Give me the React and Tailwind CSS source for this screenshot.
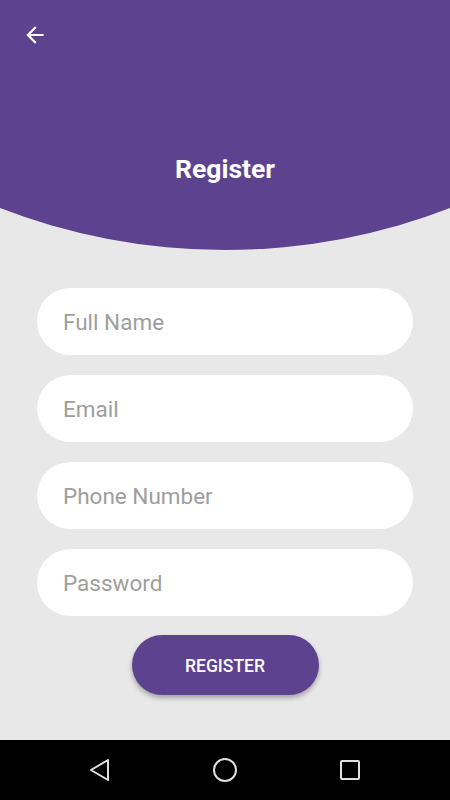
import React from "react";

function Field({ placeholder, type = "text" }) {
  return (
    <input
      type={type}
      placeholder={placeholder}
      className="h-[67px] w-full rounded-full bg-white px-[26px] text-[22.5px] text-gray-700 outline-none placeholder:text-[#9e9e9e]"
    />
  );
}

export default function App() {
  return (
    <div
      className="flex h-[800px] w-[450px] flex-col overflow-hidden bg-[#e8e8e8]"
      style={{ fontFamily: "Roboto, 'Noto Sans', sans-serif" }}
    >
      {/* Curved header */}
      <div className="relative h-[250px] shrink-0 bg-[#5d438f] [clip-path:ellipse(600px_575px_at_50%_-325px)]">
        <button className="absolute left-[22px] top-[22px] text-white">
          <svg width="26" height="26" viewBox="0 0 24 24" fill="currentColor">
            <path d="M20 11H7.83l5.59-5.59L12 4l-8 8 8 8 1.41-1.41L7.83 13H20v-2z" />
          </svg>
        </button>
        <div className="flex h-full items-start justify-center pt-[156px]">
          <h1 className="text-[26.5px] font-bold leading-none text-white">Register</h1>
        </div>
      </div>

      {/* Form */}
      <div className="flex flex-1 flex-col px-[37px] pt-[38px]">
        <div className="flex flex-col gap-[20px]">
          <Field placeholder="Full Name" />
          <Field placeholder="Email" type="email" />
          <Field placeholder="Phone Number" type="tel" />
          <Field placeholder="Password" type="password" />
        </div>
        <div className="mt-[19px] flex justify-center">
          <button className="h-[60px] w-[187px] rounded-full bg-[#5d438f] pt-[3px] text-[17.5px] font-medium text-white shadow-[0_3px_5px_rgba(0,0,0,0.3)]">
            REGISTER
          </button>
        </div>
      </div>

      {/* Android nav bar */}
      <div className="flex h-[60px] shrink-0 items-center justify-center bg-black">
        <div className="flex w-[125px] justify-center">
          <svg width="22" height="24" viewBox="0 0 22 24" fill="none" stroke="#e0e0e0" strokeWidth="2" strokeLinejoin="round">
            <path d="M19 2L2 12l17 10z" />
          </svg>
        </div>
        <div className="flex w-[125px] justify-center">
          <svg width="26" height="26" viewBox="0 0 26 26" fill="none" stroke="#e0e0e0" strokeWidth="2">
            <circle cx="13" cy="13" r="11" />
          </svg>
        </div>
        <div className="flex w-[125px] justify-center">
          <svg width="22" height="22" viewBox="0 0 22 22" fill="none" stroke="#e0e0e0" strokeWidth="2">
            <rect x="2" y="2" width="18" height="18" rx="1" />
          </svg>
        </div>
      </div>
    </div>
  );
}
